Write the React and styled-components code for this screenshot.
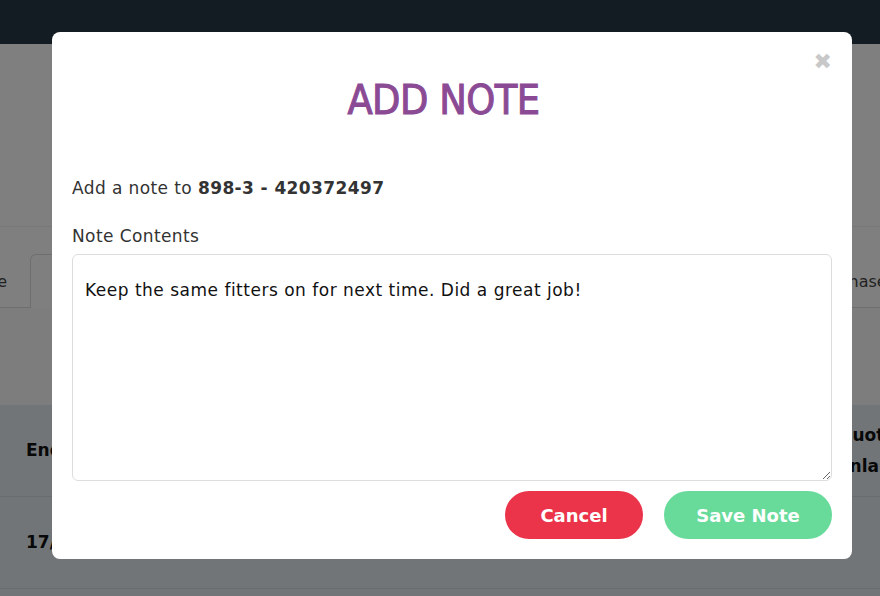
import React from 'react';
import styled, { createGlobalStyle } from 'styled-components';

const GlobalStyle = createGlobalStyle`
    html, body {
        margin: 0;
        padding: 0;
        height: 100%;
        overflow: hidden;
    }

    body {
        font-family: 'DejaVu Sans', 'Noto Sans', sans-serif;
        background: #ffffff;
    }
`;

const Page = styled.div`
    width: 880px;
    height: 596px;
    display: flex;
    flex-direction: column;
    background: #ffffff;
    color: #111;
    overflow: hidden;
`;

const Header = styled.header`
    height: 44px;
    flex-shrink: 0;
    background: #243844;
`;

const Hero = styled.div`
    height: 182px;
    flex-shrink: 0;
    border-bottom: 1px solid #f0f0f0;
`;

const Tabs = styled.div`
    display: flex;
    align-items: flex-end;
    height: 81px;
    flex-shrink: 0;
    padding-top: 27px;
    box-sizing: border-box;
    border-bottom: 1px solid #ddd;
    margin-left: -${(p) => p.shift}px;
`;

const Tab = styled.div`
    height: 54px;
    flex-shrink: 0;
    box-sizing: border-box;
    padding: 0 ${(p) => (p.active ? 20 : 16)}px;
    display: flex;
    align-items: center;
    font-size: 16px;
    color: #444;
    border: 1px solid ${(p) => (p.active ? '#ddd' : 'transparent')};
    border-bottom: none;
    border-radius: 6px 6px 0 0;
    margin-bottom: -1px;
    background: ${(p) => (p.active ? '#fff' : 'transparent')};
    width: ${(p) => p.w}px;
`;

const Spacer = styled.div`
    height: 97px;
    flex-shrink: 0;
    background: #fafafa;
`;

const Table = styled.div`
    flex: 1;
    background: #e4eaf0;
`;

const Row = styled.div`
    display: flex;
    align-items: center;
    height: 91px;
    padding-left: 26px;
    border-bottom: 1px solid #d4d9de;
    font-family: 'DejaVu Sans', sans-serif;
    font-weight: bold;
    font-size: 17px;
    line-height: 31px;
    white-space: nowrap;
`;

const Cell = styled.div`
    width: ${(p) => p.w}px;
    flex-shrink: 0;
`;

const Overlay = styled.div`
    position: fixed;
    inset: 0;
    background: rgba(0, 0, 0, 0.5);
    display: flex;
    justify-content: center;
    align-items: flex-start;
    padding-top: 32px;
`;

const Modal = styled.div`
    position: relative;
    width: 800px;
    box-sizing: border-box;
    margin-left: 24px;
    background: #fff;
    border-radius: 8px;
    padding: 44px 20px 20px;
    display: flex;
    flex-direction: column;
`;

const Close = styled.button`
    position: absolute;
    top: 18px;
    right: 20px;
    border: none;
    background: none;
    padding: 0;
    font-size: 22px;
    font-weight: bold;
    color: #c8c8c8;
    font-family: 'DejaVu Sans', sans-serif;
    line-height: 24px;
    cursor: pointer;
`;

const Title = styled.h1`
    margin: 0 0 52px;
    padding-right: 17px;
    text-align: center;
    font-family: 'DejaVu Sans Condensed', 'DejaVu Sans', sans-serif;
    font-weight: 500;
    font-size: 41px;
    line-height: 48px;
    color: #8b4a94;
    -webkit-text-stroke: 1px #8b4a94;
    letter-spacing: -0.5px;
`;

const Intro = styled.p`
    margin: 0 0 24px;
    font-size: 17px;
    letter-spacing: 0.4px;
    line-height: 24px;
    color: #333;

    strong {
        font-weight: 700;
    }
`;

const Label = styled.label`
    display: block;
    font-size: 17px;
    letter-spacing: 0.4px;
    line-height: 24px;
    color: #333;
    margin-bottom: 6px;
`;

const TextArea = styled.textarea`
    display: block;
    width: 100%;
    height: 227px;
    box-sizing: border-box;
    border: 1px solid #ddd;
    border-radius: 6px;
    padding: 23px 12px;
    font-family: 'DejaVu Sans', 'Noto Sans', sans-serif;
    font-size: 17px;
    letter-spacing: 0.5px;
    line-height: 24px;
    color: #111;
    resize: vertical;
    outline: none;
`;

const Actions = styled.div`
    display: flex;
    justify-content: flex-end;
    gap: 21px;
    margin-top: 10px;
`;

const Button = styled.button`
    height: 48px;
    width: ${(p) => p.w}px;
    border: none;
    border-radius: 24px;
    background: ${(p) => p.bg};
    color: #fff;
    font-family: 'DejaVu Sans', 'Noto Sans', sans-serif;
    font-weight: 700;
    font-size: 18px;
    cursor: pointer;
`;

export default function App() {
    return (
        <>
            <GlobalStyle />
            <Page>
                <Header />
                <Hero />
                <Tabs shift={67}>
                    <Tab w={97}>Invoice</Tab>
                    <Tab active w={120}>Notes</Tab>
                    <Tab w={647} />
                    <Tab w={130}>Purchases</Tab>
                </Tabs>
                <Spacer />
                <Table>
                    <Row>
                        <Cell w={812}>End Date</Cell>
                        <Cell w={120}>
                            Quote
                            <br />
                            Enlarge
                        </Cell>
                    </Row>
                    <Row>
                        <Cell w={812}>17/03/2023</Cell>
                    </Row>
                </Table>
            </Page>
            <Overlay>
                <Modal>
                    <Close aria-label="Close">✖</Close>
                    <Title>ADD NOTE</Title>
                    <Intro>
                        Add a note to <strong>898-3 - 420372497</strong>
                    </Intro>
                    <Label htmlFor="note">Note Contents</Label>
                    <TextArea
                        id="note"
                        defaultValue="Keep the same fitters on for next time. Did a great job!"
                    />
                    <Actions>
                        <Button w={138} bg="#eb3349">Cancel</Button>
                        <Button w={168} bg="#68db9b">Save Note</Button>
                    </Actions>
                </Modal>
            </Overlay>
        </>
    );
}
